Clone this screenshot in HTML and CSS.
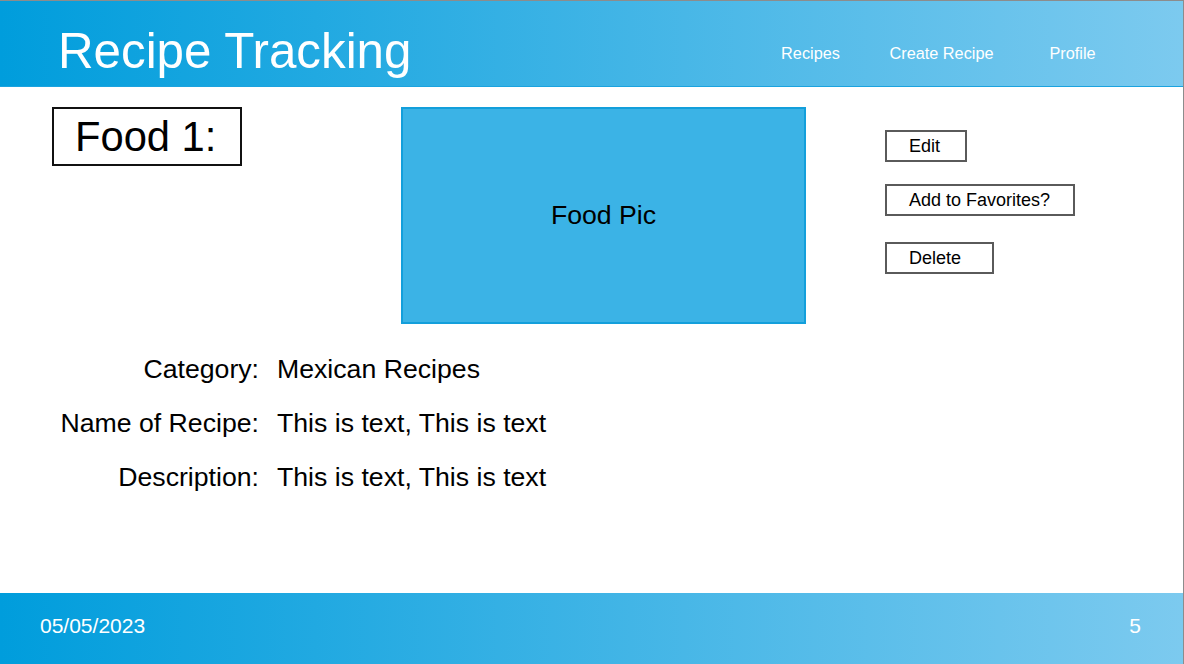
FILE: index.html
```html
<!DOCTYPE html>
<html>
<head>
<meta charset="utf-8">
<title>Recipe Tracking</title>
<link rel="stylesheet" href="styles.css">
</head>
<body>
<div class="slide">
  <header class="topbar">
    <h1 class="title">Recipe Tracking</h1>
    <nav class="nav">
      <span class="nav-item">Recipes</span>
      <span class="nav-item">Create Recipe</span>
      <span class="nav-item">Profile</span>
    </nav>
  </header>
  <main class="content">
    <div class="top-row">
      <div class="food-title">Food 1:</div>
      <div class="food-pic">Food Pic</div>
      <div class="actions">
        <div class="btn btn-edit">Edit</div>
        <div class="btn btn-fav">Add to Favorites?</div>
        <div class="btn btn-delete">Delete</div>
      </div>
    </div>
    <div class="details">
      <div class="label">Category:</div>
      <div class="value">Mexican Recipes</div>
      <div class="label">Name of Recipe:</div>
      <div class="value">This is text, This is text</div>
      <div class="label">Description:</div>
      <div class="value">This is text, This is text</div>
    </div>
  </main>
  <footer class="bottombar">
    <span class="date">05/05/2023</span>
    <span class="page">5</span>
  </footer>
</div>
</body>
</html>
```
FILE: styles.css
```css
* { box-sizing: border-box; }
html, body { margin: 0; padding: 0; }
body {
  width: 1184px;
  height: 664px;
  overflow: hidden;
  font-family: "Liberation Sans", Arial, sans-serif;
  color: #000;
  background: #fff;
}
.slide {
  width: 1184px;
  height: 664px;
  border-top: 1px solid #8c8c8c;
  border-right: 1px solid #8c8c8c;
  display: flex;
  flex-direction: column;
}
.topbar {
  height: 86px;
  flex: none;
  background: linear-gradient(90deg, #009ddc 0%, #7ccaef 100%);
  border-bottom: 1px solid #1ba3df;
  display: flex;
  align-items: flex-start;
  justify-content: space-between;
  padding-left: 58px;
  padding-right: 45px;
}
.title {
  margin: 0;
  padding-top: 25px;
  font-weight: normal;
  font-size: 49.3px;
  line-height: 1;
  color: #fff;
  letter-spacing: 0;
}
.nav {
  display: grid;
  grid-template-columns: 131px 131px 131px;
  padding-top: 42px;
}
.nav-item {
  text-align: center;
  color: #fff;
  font-size: 16.3px;
  line-height: 20px;
}
.content {
  flex: 1;
  display: flex;
  flex-direction: column;
}
.top-row {
  display: flex;
  align-items: flex-start;
  padding-top: 20px;
  padding-left: 52px;
}
.food-title {
  width: 190px;
  height: 59px;
  border: 2px solid #111;
  font-size: 41.7px;
  line-height: 55px;
  padding-left: 21px;
}
.food-pic {
  margin-left: 159px;
  width: 405px;
  height: 217px;
  background: #3bb3e6;
  border: 2px solid #139fdb;
  display: flex;
  align-items: center;
  justify-content: center;
  font-size: 26.67px;
}
.actions {
  margin-left: 79px;
  margin-top: 23px;
  display: flex;
  flex-direction: column;
  align-items: flex-start;
}
.btn {
  height: 32px;
  border: 2px solid #5a5a5a;
  font-size: 18px;
  line-height: 28px;
  padding-left: 22px;
}
.btn-edit { width: 82px; }
.btn-fav { width: 190px; margin-top: 22px; }
.btn-delete { width: 109px; margin-top: 26px; }
.details {
  display: grid;
  grid-template-columns: 259px auto;
  column-gap: 18px;
  margin-top: 18px;
  font-size: 26.67px;
  line-height: 54px;
}
.label { text-align: right; }
.bottombar {
  height: 71px;
  flex: none;
  background: linear-gradient(90deg, #009ddc 0%, #7ccaef 100%);
  display: flex;
  align-items: center;
  justify-content: space-between;
  padding-left: 40px;
  padding-right: 42px;
  padding-bottom: 6px;
  color: #fff;
  font-size: 21px;
}
```
